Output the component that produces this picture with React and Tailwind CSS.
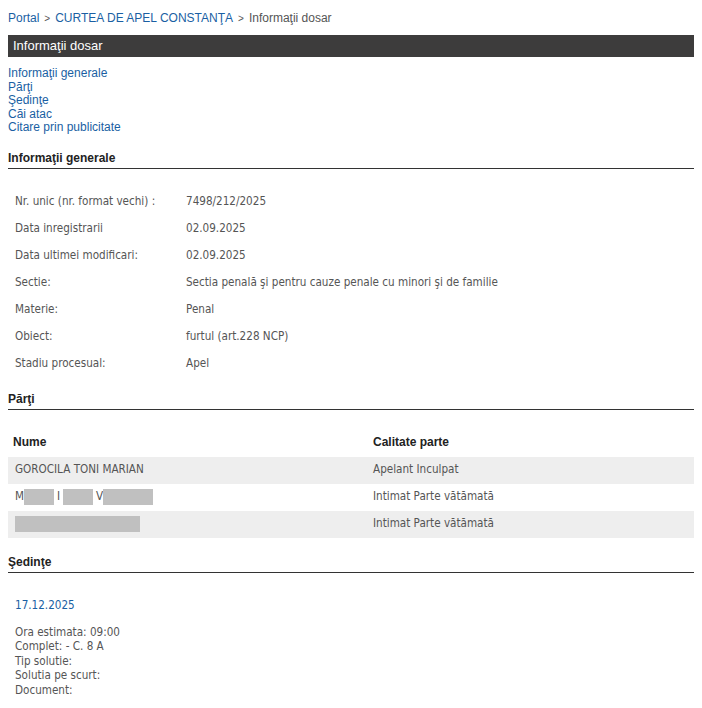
import React from 'react';

const arial = "font-['Liberation_Sans',Arial,sans-serif]";
const taho = "font-['DejaVu_Sans_Condensed','DejaVu_Sans',sans-serif]";

const generalInfo = [
  ['Nr. unic (nr. format vechi) :', '7498/212/2025'],
  ['Data inregistrarii', '02.09.2025'],
  ['Data ultimei modificari:', '02.09.2025'],
  ['Sectie:', 'Sectia penală şi pentru cauze penale cu minori şi de familie'],
  ['Materie:', 'Penal'],
  ['Obiect:', 'furtul (art.228 NCP)'],
  ['Stadiu procesual:', 'Apel'],
];

const Redacted = ({ w }) => <span className="inline-block h-4 bg-[#c0c0c0] align-middle" style={{ width: w }} />;

const SectionTitle = ({ children }) => (
  <div className={`${arial} text-[12px] font-bold text-[#222] border-b border-[#333] pb-[3px] leading-[14px]`}>
    {children}
  </div>
);

export default function App() {
  return (
    <div className={`bg-white min-h-[708px] px-2 pt-[11px] ${arial}`}>
      <div className="text-[12px] leading-[14px] text-[#555]">
        <a className="text-[#1a5fa3]">Portal</a>
        <span className="mx-[5px] text-[10px]">&gt;</span>
        <a className="text-[#1a5fa3]">CURTEA DE APEL CONSTANŢA</a>
        <span className="mx-[5px] text-[10px]">&gt;</span>
        <span>Informaţii dosar</span>
      </div>

      <div className="mt-[9px] h-[22px] bg-[#3d3c3c] text-white text-[13px] leading-[22px] pl-[5px]">
        Informaţii dosar
      </div>

      <div className="mt-[10px] flex flex-col text-[12px] leading-[13.5px] text-[#1a5fa3]">
        <a>Informaţii generale</a>
        <a>Părţi</a>
        <a>Şedinţe</a>
        <a>Căi atac</a>
        <a>Citare prin publicitate</a>
      </div>

      <div className="mt-[16px]">
        <SectionTitle>Informaţii generale</SectionTitle>
      </div>

      <div className={`${taho} mt-[20px] text-[11.6px] text-[#555]`}>
        {generalInfo.map(([k, v]) => (
          <div key={k} className="flex h-[27px] items-center pl-[7px]">
            <div className="w-[171px] shrink-0">{k}</div>
            <div>{v}</div>
          </div>
        ))}
      </div>

      <div className="mt-[14px]">
        <SectionTitle>Părţi</SectionTitle>
      </div>

      <div className={`${taho} mt-[18px] text-[11.6px] text-[#555]`}>
        <div className={`${arial} flex h-[29px] items-center font-bold text-[12px] text-[#222]`}>
          <div className="w-[365px] pl-[5px]">Nume</div>
          <div>Calitate parte</div>
        </div>
        <div className="flex h-[27px] items-center bg-[#eeeeee]">
          <div className="w-[365px] pl-[7px]">GOROCILA TONI MARIAN</div>
          <div>Apelant Inculpat</div>
        </div>
        <div className="flex h-[27px] items-center">
          <div className="w-[365px] pl-[7px] flex items-center">
            <span>M</span>
            <Redacted w={30} />
            <span className="ml-[3px] mr-[3px]">I</span>
            <Redacted w={30} />
            <span className="ml-[3px]">V</span>
            <Redacted w={50} />
          </div>
          <div>Intimat Parte vătămată</div>
        </div>
        <div className="flex h-[27px] items-center bg-[#eeeeee]">
          <div className="w-[365px] pl-[7px] flex items-center">
            <Redacted w={125} />
          </div>
          <div>Intimat Parte vătămată</div>
        </div>
      </div>

      <div className="mt-[17px]">
        <SectionTitle>Şedinţe</SectionTitle>
      </div>

      <div className={`${taho} pl-[7px] mt-[25px] text-[11.6px] text-[#555]`}>
        <div className="text-[#1a5fa3] leading-[14px]">17.12.2025</div>
        <div className="mt-[13px] leading-[14.5px]">
          <div>Ora estimata: 09:00</div>
          <div>Complet: - C. 8 A</div>
          <div>Tip solutie:</div>
          <div>Solutia pe scurt:</div>
          <div>Document:</div>
        </div>
      </div>
    </div>
  );
}
